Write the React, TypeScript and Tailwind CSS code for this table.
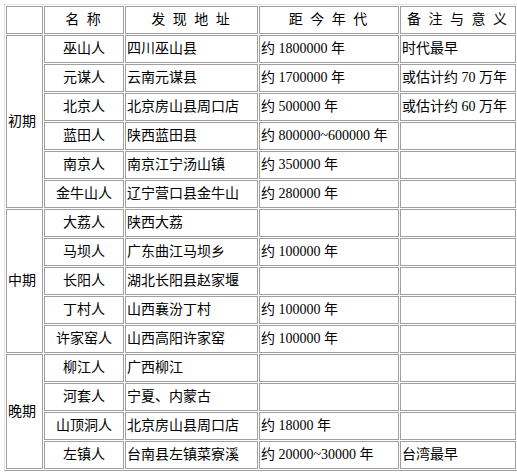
type Row = { name: string; place: string; age: string; note: string }

const groups: { period: string; rows: Row[] }[] = [
  {
    period: "初期",
    rows: [
      { name: "巫山人", place: "四川巫山县", age: "约 1800000 年", note: "时代最早" },
      { name: "元谋人", place: "云南元谋县", age: "约 1700000 年", note: "或估计约 70 万年" },
      { name: "北京人", place: "北京房山县周口店", age: "约 500000 年", note: "或估计约 60 万年" },
      { name: "蓝田人", place: "陕西蓝田县", age: "约 800000~600000 年", note: "" },
      { name: "南京人", place: "南京江宁汤山镇", age: "约 350000 年", note: "" },
      { name: "金牛山人", place: "辽宁营口县金牛山", age: "约 280000 年", note: "" },
    ],
  },
  {
    period: "中期",
    rows: [
      { name: "大荔人", place: "陕西大荔", age: "", note: "" },
      { name: "马坝人", place: "广东曲江马坝乡", age: "约 100000 年", note: "" },
      { name: "长阳人", place: "湖北长阳县赵家堰", age: "", note: "" },
      { name: "丁村人", place: "山西襄汾丁村", age: "约 100000 年", note: "" },
      { name: "许家窑人", place: "山西高阳许家窑", age: "约 100000 年", note: "" },
    ],
  },
  {
    period: "晚期",
    rows: [
      { name: "柳江人", place: "广西柳江", age: "", note: "" },
      { name: "河套人", place: "宁夏、内蒙古", age: "", note: "" },
      { name: "山顶洞人", place: "北京房山县周口店", age: "约 18000 年", note: "" },
      { name: "左镇人", place: "台南县左镇菜寮溪", age: "约 20000~30000 年", note: "台湾最早" },
    ],
  },
]

const cell = "border border-[#a0a0a0] h-[28px] p-0 align-middle"
const head = `${cell} text-center tracking-[2px]`

export default function App() {
  return (
    <div className="bg-white w-[517px] h-[475px] pt-[4px] pl-[4px] font-['Liberation_Serif','Noto_Sans_CJK_SC',serif] text-[14px] leading-[16px] text-black">
      <table className="border-separate border-spacing-[1px] border border-t-[#e4e4e4] border-l-[#e4e4e4] border-r-[#a0a0a0] border-b-[#a0a0a0] table-fixed w-[509px]">
        <colgroup>
          <col className="w-[37px]" />
          <col className="w-[80px]" />
          <col className="w-[133px]" />
          <col className="w-[140px]" />
          <col className="w-[116px]" />
        </colgroup>
        <thead>
          <tr>
            <td className={cell}></td>
            <td className={head}>名 称</td>
            <td className={head}>发 现 地 址</td>
            <td className={head}>距 今 年 代</td>
            <td className={head}>备 注 与 意 义</td>
          </tr>
        </thead>
        <tbody>
          {groups.map((g) =>
            g.rows.map((r, i) => (
              <tr key={r.name}>
                {i === 0 && (
                  <td rowSpan={g.rows.length} className={`${cell} pl-[1px]`}>
                    {g.period}
                  </td>
                )}
                <td className={`${cell} text-center`}>{r.name}</td>
                <td className={`${cell} pl-[1px] whitespace-nowrap`}>{r.place}</td>
                <td className={`${cell} pl-[1px] whitespace-nowrap`}>{r.age}</td>
                <td className={`${cell} pl-[1px] whitespace-nowrap`}>{r.note}</td>
              </tr>
            ))
          )}
        </tbody>
      </table>
    </div>
  )
}
